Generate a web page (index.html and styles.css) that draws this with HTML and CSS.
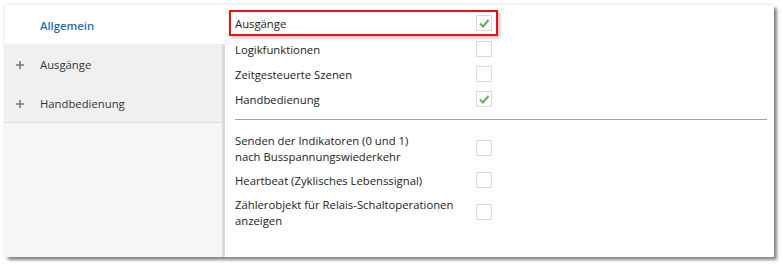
FILE: index.html
```html
<!DOCTYPE html>
<html lang="de">
<head>
  <meta charset="UTF-8">
  <title>Allgemein</title>
  <link rel="stylesheet" href="styles.css">
</head>
<body>
  <div class="window">
    <div class="sidebar">
      <div class="nav-item active">Allgemein</div>
      <div class="nav-item">
        <svg class="plus" width="8" height="8" viewBox="0 0 8 8"><path d="M4 0v8M0 4h8" stroke="#7a7a7a" stroke-width="1.6"/></svg>
        Ausgänge
      </div>
      <div class="nav-item">
        <svg class="plus" width="8" height="8" viewBox="0 0 8 8"><path d="M4 0v8M0 4h8" stroke="#7a7a7a" stroke-width="1.6"/></svg>
        Handbedienung
      </div>
      <div class="nav-fill"></div>
    </div>

    <div class="content">
      <div class="row highlight">
        <span class="label">Ausgänge</span>
        <span class="check on"><svg width="14" height="14" viewBox="0 0 14 14"><path d="M3 7.5l3 3 5.5-6.5" fill="none" stroke="#67a967" stroke-width="2"/></svg></span>
      </div>
      <div class="row">
        <span class="label">Logikfunktionen</span>
        <span class="check"></span>
      </div>
      <div class="row">
        <span class="label">Zeitgesteuerte Szenen</span>
        <span class="check"></span>
      </div>
      <div class="row">
        <span class="label">Handbedienung</span>
        <span class="check on"><svg width="14" height="14" viewBox="0 0 14 14"><path d="M3 7.5l3 3 5.5-6.5" fill="none" stroke="#67a967" stroke-width="2"/></svg></span>
      </div>

      <hr class="sep">

      <div class="row tall">
        <span class="label">Senden der Indikatoren (0 und 1)<br>nach Busspannungswiederkehr</span>
        <span class="check"></span>
      </div>
      <div class="row mid">
        <span class="label">Heartbeat (Zyklisches Lebenssignal)</span>
        <span class="check"></span>
      </div>
      <div class="row tall">
        <span class="label">Zählerobjekt für Relais-Schaltoperationen<br>anzeigen</span>
        <span class="check"></span>
      </div>
    </div>
  </div>
</body>
</html>
```

FILE: styles.css
```css
body {
  margin: 0;
  padding: 5px;
  background: #fff;
  font-family: "Open Sans", "Noto Sans", sans-serif;
  font-size: 11.3px;
  color: #222;
}
.window {
  display: flex;
  width: 769px;
  height: 252px;
  background: #fff;
  box-shadow: 0 0 3px rgba(0,0,0,0.15), 3px 3px 3px rgba(0,0,0,0.45);
}
.sidebar {
  width: 220px;
  display: flex;
  flex-direction: column;
}
.nav-item {
  height: 38px;
  display: flex;
  align-items: center;
  padding-left: 35px;
  padding-top: 1px;
  margin-bottom: -1px;
  background: #f0f0f0;
  border-bottom: 1px solid #dcdcdc;
  border-right: 3px solid #d9d9d9;
  color: #333;
  position: relative;
  box-sizing: content-box;
}
.nav-item.active {
  background: #fff;
  border-right: 3px solid #fff;
  color: #2b6cb5;
  font-weight: 600;
}
.plus {
  position: absolute;
  left: 11px;
  top: 17px;
}
.nav-fill {
  flex: 1;
  margin-top: 1px;
  background: #f5f6f8;
  border-right: 3px solid #d9d9d9;
}
.content {
  flex: 1;
  padding: 5px 7px 0 10px;
}
.row {
  display: flex;
  align-items: center;
  height: 25px;
  width: 257px;
}
.row.highlight {
  box-sizing: border-box;
  height: 26px;
  width: 269px;
  margin-left: -6px;
  padding: 0 4px;
  border: 2px solid #e5101a;
  box-shadow: 2px 2px 3px rgba(0,0,0,0.25);
}
.row.tall {
  height: 40px;
}
.row.mid {
  height: 24px;
}
.label {
  flex: 1;
  line-height: 16px;
  padding-top: 2px;
}
.check {
  width: 14px;
  height: 14px;
  border: 1px solid #dadada;
  display: flex;
  align-items: center;
  justify-content: center;
}
.sep {
  border: 0;
  border-top: 1px solid #a0a0a0;
  margin: 8px 0 8px 0;
}
```
